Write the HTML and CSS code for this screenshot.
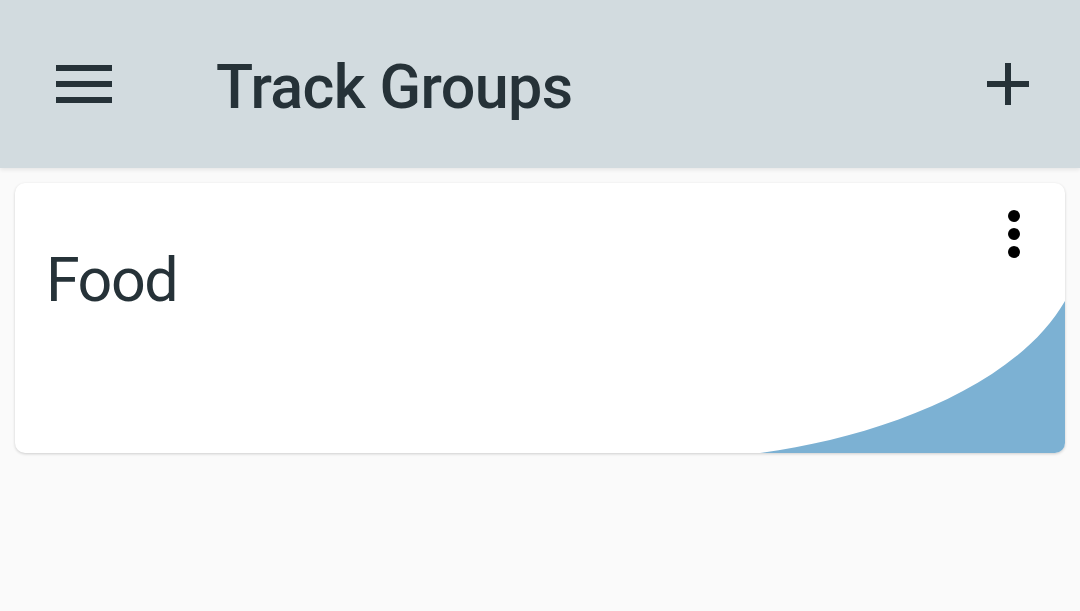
FILE: index.html
```html
<!DOCTYPE html>
<html>
<head>
<meta charset="utf-8">
<link rel="stylesheet" href="styles.css">
</head>
<body>
<header class="toolbar">
  <button class="icon-btn menu-btn" aria-label="Menu">
    <svg width="56" height="38" viewBox="0 0 56 38"><rect x="0" y="0" width="56" height="6" fill="#263238"/><rect x="0" y="16" width="56" height="6" fill="#263238"/><rect x="0" y="32" width="56" height="6" fill="#263238"/></svg>
  </button>
  <h1 class="title">Track Groups</h1>
  <button class="icon-btn add-btn" aria-label="Add">
    <svg width="42" height="42" viewBox="0 0 42 42"><rect x="18" y="0" width="6" height="42" fill="#263238"/><rect x="0" y="18" width="42" height="6" fill="#263238"/></svg>
  </button>
</header>
<main class="content">
  <section class="card">
    <svg class="chart" viewBox="0 0 1050 270" preserveAspectRatio="none"><path d="M745 270 C860 255 1000 205 1050 118 L1050 270 Z" fill="#7cb1d3"/></svg>
    <div class="card-name">Food</div>
    <button class="icon-btn more-btn" aria-label="More">
      <svg width="12" height="48" viewBox="0 0 12 48"><circle cx="6" cy="6" r="6" fill="#000"/><circle cx="6" cy="24" r="6" fill="#000"/><circle cx="6" cy="42" r="6" fill="#000"/></svg>
    </button>
  </section>
</main>
</body>
</html>
```
FILE: styles.css
```css
html, body {
  margin: 0;
  padding: 0;
  background: #fafafa;
  font-family: Roboto, "Noto Sans", sans-serif;
  color: #263238;
}
.toolbar {
  height: 168px;
  background: #d2dbdf;
  display: flex;
  align-items: center;
  box-shadow: 0 2px 4px rgba(0,0,0,0.08);
  position: relative;
  z-index: 1;
}
.icon-btn {
  background: none;
  border: none;
  padding: 0;
  margin: 0;
  display: flex;
}
.menu-btn {
  margin-left: 56px;
}
.title {
  margin: 6px 0 0 104px;
  font-size: 61px;
  font-weight: 500;
  letter-spacing: -0.6px;
  line-height: 1;
  flex: 1;
}
.add-btn {
  margin-right: 51px;
}
.content {
  padding: 15px;
}
.card {
  position: relative;
  height: 270px;
  background: #fff;
  border-radius: 10px;
  overflow: hidden;
  box-shadow: 0 1px 3px rgba(0,0,0,0.18);
}
.chart {
  position: absolute;
  left: 0;
  top: 0;
  width: 100%;
  height: 100%;
}
.card-name {
  position: relative;
  padding: 67px 0 0 31px;
  font-size: 61px;
  letter-spacing: -1.5px;
  line-height: 1;
}
.more-btn {
  position: absolute;
  top: 27px;
  right: 45px;
}
```
